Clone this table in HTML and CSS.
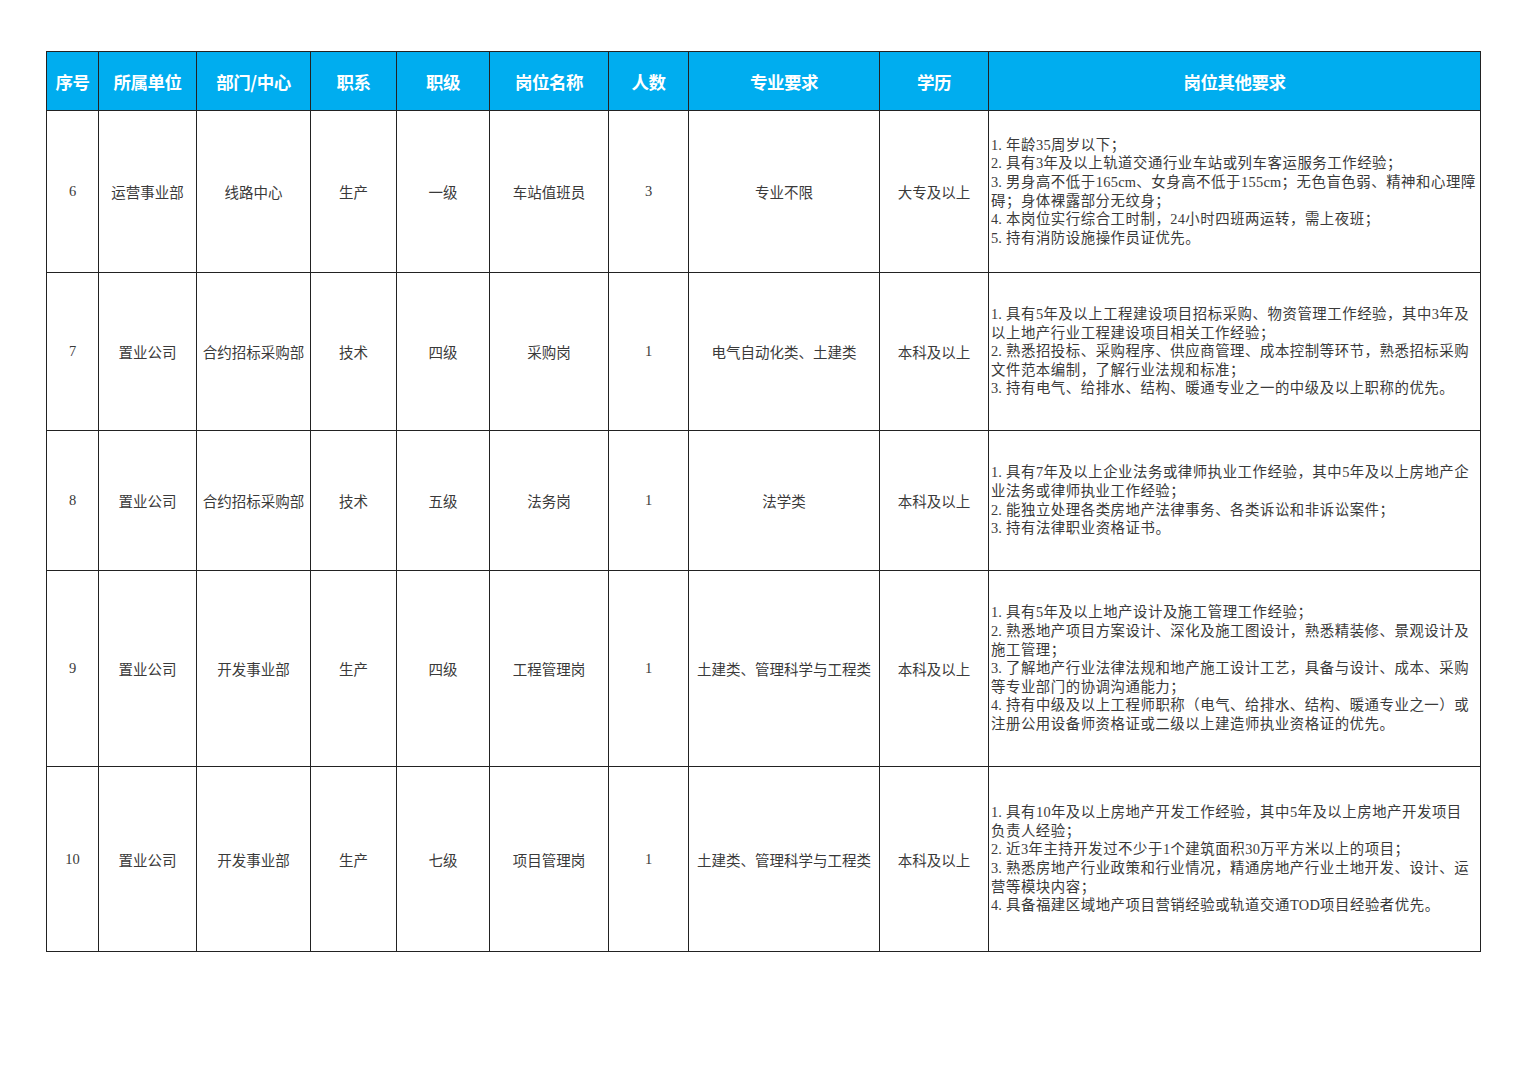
FILE: index.html
```html
<!DOCTYPE html>
<html lang="zh-CN">
<head>
<meta charset="utf-8">
<title>招聘岗位</title>
<link rel="stylesheet" href="styles.css">
</head>
<body>
<div class="page">
<table class="jobs">
<colgroup>
<col class="c-no"><col class="c-unit"><col class="c-dept"><col class="c-type"><col class="c-level"><col class="c-post"><col class="c-num"><col class="c-major"><col class="c-edu"><col class="c-other">
</colgroup>
<thead>
<tr class="head">
<th>序号</th><th>所属单位</th><th>部门/中心</th><th>职系</th><th>职级</th><th>岗位名称</th><th>人数</th><th>专业要求</th><th>学历</th><th>岗位其他要求</th>
</tr>
</thead>
<tbody>
<tr class="r6">
<td class="num">6</td><td>运营事业部</td><td>线路中心</td><td>生产</td><td>一级</td><td>车站值班员</td><td class="num">3</td><td>专业不限</td><td>大专及以上</td>
<td class="other"><span class="li">1.</span>年龄<span class="n">35</span>周岁以下；<br><span class="li">2.</span>具有<span class="n">3</span>年及以上轨道交通行业车站或列车客运服务工作经验；<br><span class="li">3.</span>男身高不低于<span class="n">165cm</span>、女身高不低于<span class="n">155cm</span>；无色盲色弱、精神和心理障<br>碍；身体裸露部分无纹身；<br><span class="li">4.</span>本岗位实行综合工时制，<span class="n">24</span>小时四班两运转，需上夜班；<br><span class="li">5.</span>持有消防设施操作员证优先。</td>
</tr>
<tr class="r7">
<td class="num">7</td><td>置业公司</td><td>合约招标采购部</td><td>技术</td><td>四级</td><td>采购岗</td><td class="num">1</td><td>电气自动化类、土建类</td><td>本科及以上</td>
<td class="other"><span class="li">1.</span>具有<span class="n">5</span>年及以上工程建设项目招标采购、物资管理工作经验，其中<span class="n">3</span>年及<br>以上地产行业工程建设项目相关工作经验；<br><span class="li">2.</span>熟悉招投标、采购程序、供应商管理、成本控制等环节，熟悉招标采购<br>文件范本编制，了解行业法规和标准；<br><span class="li">3.</span>持有电气、给排水、结构、暖通专业之一的中级及以上职称的优先。</td>
</tr>
<tr class="r8">
<td class="num">8</td><td>置业公司</td><td>合约招标采购部</td><td>技术</td><td>五级</td><td>法务岗</td><td class="num">1</td><td>法学类</td><td>本科及以上</td>
<td class="other"><span class="li">1.</span>具有<span class="n">7</span>年及以上企业法务或律师执业工作经验，其中<span class="n">5</span>年及以上房地产企<br>业法务或律师执业工作经验；<br><span class="li">2.</span>能独立处理各类房地产法律事务、各类诉讼和非诉讼案件；<br><span class="li">3.</span>持有法律职业资格证书。</td>
</tr>
<tr class="r9">
<td class="num">9</td><td>置业公司</td><td>开发事业部</td><td>生产</td><td>四级</td><td>工程管理岗</td><td class="num">1</td><td>土建类、管理科学与工程类</td><td>本科及以上</td>
<td class="other"><span class="li">1.</span>具有<span class="n">5</span>年及以上地产设计及施工管理工作经验；<br><span class="li">2.</span>熟悉地产项目方案设计、深化及施工图设计，熟悉精装修、景观设计及<br>施工管理；<br><span class="li">3.</span>了解地产行业法律法规和地产施工设计工艺，具备与设计、成本、采购<br>等专业部门的协调沟通能力；<br><span class="li">4.</span>持有中级及以上工程师职称（电气、给排水、结构、暖通专业之一）或<br>注册公用设备师资格证或二级以上建造师执业资格证的优先。</td>
</tr>
<tr class="r10">
<td class="num">10</td><td>置业公司</td><td>开发事业部</td><td>生产</td><td>七级</td><td>项目管理岗</td><td class="num">1</td><td>土建类、管理科学与工程类</td><td>本科及以上</td>
<td class="other"><span class="li">1.</span>具有<span class="n">10</span>年及以上房地产开发工作经验，其中<span class="n">5</span>年及以上房地产开发项目<br>负责人经验；<br><span class="li">2.</span>近<span class="n">3</span>年主持开发过不少于<span class="n">1</span>个建筑面积<span class="n">30</span>万平方米以上的项目；<br><span class="li">3.</span>熟悉房地产行业政策和行业情况，精通房地产行业土地开发、设计、运<br>营等模块内容；<br><span class="li">4.</span>具备福建区域地产项目营销经验或轨道交通<span class="n">TOD</span>项目经验者优先。</td>
</tr>
</tbody>
</table>
</div>
</body>
</html>
```

FILE: styles.css
```css
html, body {
  margin: 0;
  padding: 0;
  background: #ffffff;
}

.page {
  padding: 51px 47px 0 46px;
}

.jobs {
  width: 1434px;
  border-collapse: collapse;
  table-layout: fixed;
  font-family: "Liberation Serif", "Noto Sans CJK SC", serif;
  color: #3a3a3a;
}

.c-no { width: 52px; }
.c-unit { width: 98px; }
.c-dept { width: 114px; }
.c-type { width: 86px; }
.c-level { width: 93px; }
.c-post { width: 119px; }
.c-num { width: 80px; }
.c-major { width: 191px; }
.c-edu { width: 109px; }
.c-other { width: 492px; }

.jobs th,
.jobs td {
  border: 1.6px solid #222;
  padding: 0;
  text-align: center;
  vertical-align: middle;
  white-space: nowrap;
  overflow: hidden;
}

.jobs th {
  background: #00adef;
  color: #ffffff;
  font-family: "Noto Sans CJK SC", sans-serif;
  font-weight: 700;
  font-size: 17.5px;
  letter-spacing: -0.5px;
}

.jobs td {
  font-size: 14.5px;
  font-weight: 400;
}

.jobs td.num {
  font-family: "Liberation Serif", serif;
}

.jobs td.other {
  text-align: left;
  padding-left: 2px;
  line-height: 18.6px;
  font-size: 14.4px;
  letter-spacing: 0.55px;
}

.n {
  font-family: "Liberation Serif", serif;
  letter-spacing: 0.3px;
}

.li {
  display: inline-block;
  width: 15px;
  font-family: "Liberation Serif", serif;
  letter-spacing: 0;
}

.head { height: 59px; }
.r6 { height: 162px; }
.r7 { height: 158px; }
.r8 { height: 140px; }
.r9 { height: 196px; }
.r10 { height: 185px; }
```
